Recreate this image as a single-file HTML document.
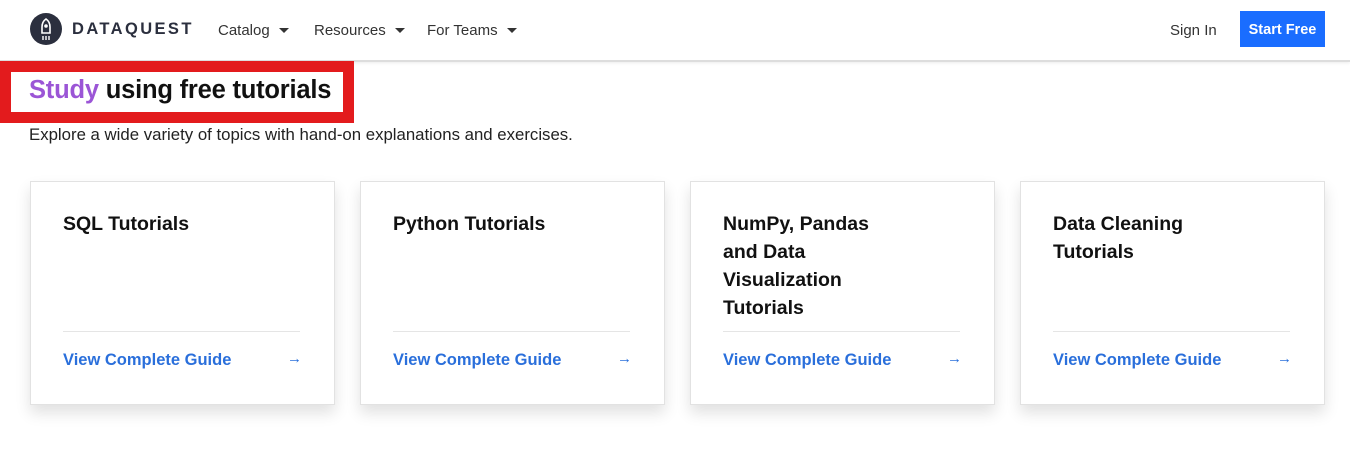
<!DOCTYPE html>
<html><head><style>
*{box-sizing:border-box;margin:0;padding:0}
body{width:1350px;height:475px;background:#fff;font-family:"Liberation Sans",sans-serif;position:relative;overflow:hidden;color:#111}
.hdr{position:absolute;left:0;top:0;width:1350px;height:62px;border-bottom:2px solid #ddd;box-shadow:0 1px 3px rgba(0,0,0,.08)}
.logo{position:absolute;left:30px;top:13px;width:32px;height:32px;border-radius:50%;background:#2b2f3e}
.brand{position:absolute;left:72px;top:20px;font-size:16.5px;letter-spacing:2.4px;color:#2b2f3e;font-weight:bold}
.nav{position:absolute;top:22px;font-size:15px;color:#333}
.nav:after{content:"";display:inline-block;margin-left:9px;border:5px solid transparent;border-top:5px solid #333;vertical-align:-3px}
.sign{position:absolute;left:1170px;top:22px;font-size:15px;color:#333}
.btn{position:absolute;left:1240px;top:11px;width:85px;height:36px;background:#1a6dff;color:#fff;font-weight:bold;font-size:14.5px;text-align:center;line-height:38px}
.red{position:absolute;left:0;top:61px;width:354px;height:62px;border:11px solid #e31b1d;background:#fff}
h1{position:absolute;left:29px;top:76px;font-size:25.5px;font-weight:bold;color:#111;letter-spacing:-0.2px}
h1 span{color:#9b55d6}
.sub{position:absolute;left:29px;top:125px;font-size:16.8px;color:#222}
.card{position:absolute;top:181px;width:305px;height:224px;background:#fff;border:1px solid #e2e2e2;box-shadow:0 8px 14px rgba(0,0,0,.12)}
.card h2{position:absolute;left:32px;top:28px;font-size:19.5px;line-height:28px;font-weight:bold;color:#111;width:200px}
.card .ln{position:absolute;left:32px;right:34px;top:149px;border-top:1px solid #e5e5e5}
.card .lk{position:absolute;left:32px;top:169px;font-size:16.5px;font-weight:bold;color:#2a6fdb}
.card .ar{position:absolute;right:32px;top:168px;font-size:15px;color:#2a6fdb}
</style></head><body>
<div class="hdr">
<div class="logo"><svg width="32" height="32" viewBox="0 0 32 32"><path d="M16 6c-3 2-4 5-4 8v6h8v-6c0-3-1-6-4-8z" fill="none" stroke="#fff" stroke-width="1.6"/><circle cx="16" cy="13" r="1.8" fill="#fff"/><path d="M13 23v4M16 23v4M19 23v4" stroke="#fff" stroke-width="1.4"/></svg></div>
<div class="brand">DATAQUEST</div>
<div class="nav" style="left:218px">Catalog</div>
<div class="nav" style="left:314px">Resources</div>
<div class="nav" style="left:427px">For Teams</div>
<div class="sign">Sign In</div>
<div class="btn">Start Free</div>
</div>
<div class="red"></div>
<h1><span>Study</span> using free tutorials</h1>
<div class="sub">Explore a wide variety of topics with hand-on explanations and exercises.</div>
<div class="card" style="left:30px"><h2>SQL Tutorials</h2><div class="ln"></div><div class="lk">View Complete Guide</div><div class="ar">→</div></div>
<div class="card" style="left:360px"><h2>Python Tutorials</h2><div class="ln"></div><div class="lk">View Complete Guide</div><div class="ar">→</div></div>
<div class="card" style="left:690px"><h2 style="width:170px">NumPy, Pandas and Data Visualization Tutorials</h2><div class="ln"></div><div class="lk">View Complete Guide</div><div class="ar">→</div></div>
<div class="card" style="left:1020px"><h2>Data Cleaning Tutorials</h2><div class="ln"></div><div class="lk">View Complete Guide</div><div class="ar">→</div></div>
</body></html>
